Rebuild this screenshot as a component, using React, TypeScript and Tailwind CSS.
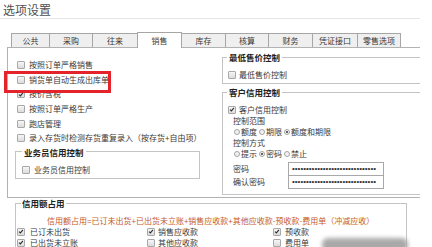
import React from "react";

const Check = ({ checked }: { checked?: boolean }) => (
  <span className="flex h-[8px] w-[8px] shrink-0 items-center justify-center rounded-[1px] border border-[#a8a8a8] bg-linear-to-b from-[#f6f6f6] to-[#dcdcdc]">
    {checked && (
      <svg viewBox="0 0 8 8" className="h-[7px] w-[7px]">
        <path d="M1.4 4.1 L3.2 5.9 L6.6 1.9" stroke="#2e2e2e" strokeWidth="1.5" fill="none" />
      </svg>
    )}
  </span>
);

const Radio = ({ on }: { on?: boolean }) => (
  <span className="flex h-[6px] w-[6px] shrink-0 items-center justify-center rounded-full border border-[#a4a4a4] bg-[#f2f2f2]">
    {on && <span className="h-[2px] w-[2px] rounded-full bg-[#333]" />}
  </span>
);

const Item = ({ label, checked, gap = "gap-[4px]", h = "h-[14.6px]" }: { label: string; checked?: boolean; gap?: string; h?: string }) => (
  <div className={`flex items-center ${gap} ${h}`}>
    <Check checked={checked} />
    <span className="whitespace-nowrap">{label}</span>
  </div>
);

const tabs = [
  { name: "公共", w: "w-[39px]" },
  { name: "采购", w: "w-[44px]" },
  { name: "往来", w: "w-[46px]" },
  { name: "销售", w: "w-[45px]", active: true },
  { name: "库存", w: "w-[45px]" },
  { name: "核算", w: "w-[44px]" },
  { name: "财务", w: "w-[45px]" },
  { name: "凭证接口", w: "w-[46px]" },
  { name: "零售选项", w: "w-[44px]" },
];

const dots = "•".repeat(30);

export default function App() {
  return (
    <div className="relative h-[247px] w-[432px] overflow-hidden bg-white font-['Noto_Sans_CJK_SC',sans-serif] text-[8px] text-[#383838]">
      <div className="w-[420px] overflow-hidden">
        {/* title */}
        <div className="h-[19px] border-b border-[#e6e6e6] pl-[3px] text-[12px] leading-[19px] text-[#505050]">选项设置</div>

        {/* tabs */}
        <div className="relative z-10 ml-[11px] mt-[13px] flex h-[16px] items-start">
          {tabs.map((t, i) => (
            <div
              key={t.name}
              className={`${t.w} ${i > 0 ? "-ml-px" : ""} flex items-center justify-center border border-b-0 border-[#a6a6a6] pt-[1px] ${
                t.active ? "relative h-[16px] bg-white" : "mt-[1px] h-[14px] bg-[#efefef]"
              }`}
            >
              {t.name}
            </div>
          ))}
        </div>

        {/* panel */}
        <div className="-mt-px ml-[7px] flex h-[151px] w-[420px] border-b border-l border-t border-[#b2b2b2] bg-white">
          {/* left column */}
          <div className="w-[214px] shrink-0 pl-[9px] pt-[10px]">
            <Item label="按照订单严格销售" />
            <Item label="销货单自动生成出库单" />
            <Item label="按价含税" checked />
            <Item label="按照订单严格生产" />
            <Item label="跑店管理" />
            <Item label="录入存货时检测存货重复录入（按存货+自由项）" />
            <fieldset className="-ml-[2px] mt-[1px] w-[185px] border border-[#c4c4c4] pb-[1px] pl-[5px]">
              <legend className="ml-[1px] px-[2px] text-[8.5px] font-bold leading-[10px] text-[#222]">业务员信用控制</legend>
              <div className="ml-[1px] pt-[6px]">
                <Item label="业务员信用控制" h="h-[14px]" />
              </div>
            </fieldset>
          </div>

          {/* right column */}
          <div className="flex-1">
            <fieldset className="mt-[4px] w-[220px] border border-[#c4c4c4] pb-[1px] pl-[4px]">
              <legend className="px-[2px] text-[8.5px] font-bold leading-[10px] text-[#222]">最低售价控制</legend>
              <div className="ml-[1px] pt-[6px]">
                <Item label="最低售价控制" h="h-[14px]" gap="gap-[3px]" />
              </div>
            </fieldset>

            <fieldset className="mt-[3px] w-[220px] border border-[#c4c4c4] pb-[5px] pl-[4px]">
              <legend className="px-[2px] text-[8.5px] font-bold leading-[10px] text-[#222]">客户信用控制</legend>
              <div className="ml-[1px] pt-[7px]">
                <Item label="客户信用控制" checked h="h-[11.2px]" gap="gap-[3px]" />
                <div className="flex h-[11.2px] items-center pl-[5px]">控制范围</div>
                <div className="flex h-[11.2px] items-center gap-[1px] pl-[6px]">
                  <Radio />
                  <span>额度</span>
                  <span className="ml-[1px]"><Radio /></span>
                  <span>期限</span>
                  <span className="ml-[1px]"><Radio on /></span>
                  <span>额度和期限</span>
                </div>
                <div className="flex h-[11.2px] items-center pl-[5px]">控制方式</div>
                <div className="flex h-[11.2px] items-center gap-[1px] pl-[6px]">
                  <Radio />
                  <span>提示</span>
                  <span className="ml-[1px]"><Radio on /></span>
                  <span>密码</span>
                  <span className="ml-[1px]"><Radio /></span>
                  <span>禁止</span>
                </div>
                <div className="mt-[2px] flex items-center pl-[5px]">
                  <span className="w-[55px]">密码</span>
                  <div className="flex h-[14px] w-[96px] items-center overflow-hidden border border-[#a8a8a8] bg-white pl-[3px] font-['Liberation_Sans',sans-serif] text-[8px] text-[#333]">{dots}</div>
                </div>
                <div className="-mt-px flex items-center pl-[5px]">
                  <span className="w-[55px]">确认密码</span>
                  <div className="flex h-[14px] w-[96px] items-center overflow-hidden border border-[#a8a8a8] bg-white pl-[3px] font-['Liberation_Sans',sans-serif] text-[8px] text-[#333]">{dots}</div>
                </div>
              </div>
            </fieldset>
          </div>
        </div>

        {/* 信用额占用 */}
        <fieldset className="ml-[15px] w-[392px] border border-[#c4c4c4] px-[1px] pb-[4px]">
          <legend className="ml-[4px] px-[1px] text-[8.5px] font-bold leading-[10px] text-[#222]">信用额占用</legend>
          <div className="pt-[7px]">
            <div className="flex h-[11px] items-center whitespace-nowrap pl-[30px] text-[#c65a28]">
              信用额占用=已订未出货+已出货未立账+销售应收款+其他应收款-预收款-费用单（冲减应收）
            </div>
            <div className="grid grid-cols-[130px_126px_1fr]">
              <Item label="已订未出货" checked h="h-[11px]" gap="gap-[5px]" />
              <Item label="销售应收款" checked h="h-[11px]" gap="gap-[3px]" />
              <Item label="预收款" checked h="h-[11px]" gap="gap-[4px]" />
              <Item label="已出货未立账" checked h="h-[11px]" gap="gap-[5px]" />
              <Item label="其他应收款" h="h-[11px]" gap="gap-[3px]" />
              <Item label="费用单" h="h-[11px]" gap="gap-[4px]" />
            </div>
          </div>
        </fieldset>
      </div>

      {/* highlight + smudge overlays */}
      <div className="absolute left-[4px] top-[71px] h-[22px] w-[107px] border-[3px] border-[#e5232a]" />
      <div className="absolute left-[322px] top-[238px] h-[14px] w-[86px] rounded-[6px] bg-[#a9a9a9] blur-[2px]" />
    </div>
  );
}
